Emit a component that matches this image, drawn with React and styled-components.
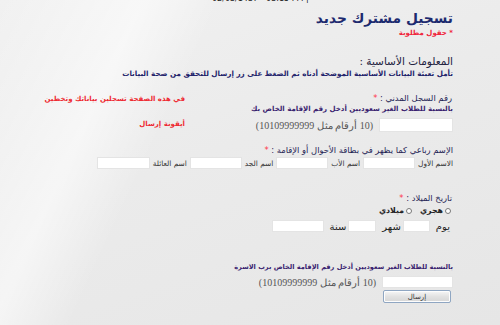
import React, { useState } from 'react';
import styled, { createGlobalStyle } from 'styled-components';

const GlobalStyle = createGlobalStyle`
  html, body {
    margin: 0;
    padding: 0;
  }
  body {
    font-family: "DejaVu Sans", "Liberation Sans", sans-serif;
  }
`;

const Page = styled.div`
  width: 500px;
  height: 325px;
  overflow: hidden;
  direction: rtl;
  box-sizing: border-box;
  padding: 0 47px 0 0;
  background:
    linear-gradient(115deg, rgba(255,255,255,0) 0%, rgba(255,255,255,0.55) 22%, rgba(255,255,255,0) 34%),
    linear-gradient(160deg, #f1f1f1 0%, #ebebeb 45%, #e6e6e6 100%);
`;

const TopLine = styled.div`
  direction: ltr;
  margin-top: -6px;
  height: 11px;
  padding-left: 212px;
  font-size: 8px;
  color: #222;
  white-space: nowrap;
`;

const Title = styled.h1`
  margin: 2px 0 0;
  font-size: 13.8px;
  font-weight: bold;
  color: #1d2a6f;
  line-height: 22px;
`;

const Required = styled.div`
  font-size: 7px;
  font-weight: bold;
  color: #f0243a;
  line-height: 9px;
`;

const SectionTitle = styled.h2`
  margin: 16px 0 0;
  font-size: 10.5px;
  font-weight: normal;
  color: #222240;
  line-height: 15px;
`;

const Instructions = styled.p`
  margin: 0;
  font-size: 7.2px;
  font-weight: bold;
  color: #23236b;
  line-height: 10px;
  white-space: nowrap;
`;

const FirstBlock = styled.div`
  display: flex;
  justify-content: space-between;
  align-items: flex-start;
  margin-top: 14px;
`;

const Field = styled.div`
  display: flex;
  flex-direction: column;
  margin-top: ${p => p.$top || 0}px;
`;

const Label = styled.div`
  font-size: 8.4px;
  color: #1f1f55;
  line-height: 11px;
  padding-right: ${p => p.$indent || 0}px;
  white-space: nowrap;
`;

const Star = styled.span`
  color: #ff3348;
`;

const Note = styled.div`
  font-size: ${p => p.$size || 7}px;
  font-weight: bold;
  color: #3a1f70;
  line-height: 10px;
  white-space: nowrap;
`;

const Row = styled.div`
  display: flex;
  align-items: center;
  gap: ${p => p.$gap || 3}px;
  margin-top: ${p => p.$top || 0}px;
  padding-right: ${p => p.$indent || 0}px;
`;

const Input = styled.input`
  box-sizing: border-box;
  width: ${p => p.$w}px;
  height: ${p => p.$h || 13}px;
  border: 1px solid #e4e4e4;
  background: #fff;
  padding: 0;
  margin: 0;
  outline: none;
`;

const Hint = styled.span`
  font-family: "Liberation Serif", "DejaVu Serif", serif;
  font-size: 10px;
  color: #555;
  white-space: nowrap;
  margin-right: 3px;
`;

const SmallLabel = styled.span`
  font-size: 7.4px;
  color: #333;
  white-space: nowrap;
`;

const DateLabel = styled.span`
  font-size: 10px;
  color: #222;
  white-space: nowrap;
  margin-left: 4px;
`;

const SideText = styled.div`
  width: 140px;
  padding-left: 45px;
  font-size: 7px;
  font-weight: bold;
  color: #ee2a32;
  line-height: 12px;
  text-align: right;
  white-space: nowrap;
`;

const SideLine = styled.div`
  margin-bottom: ${p => p.$gap || 0}px;
`;

const RadioGroup = styled.label`
  display: inline-flex;
  align-items: center;
  gap: 2px;
  font-size: 7.8px;
  font-weight: bold;
  color: #222;
  margin-left: 5px;
`;

const Radio = styled.input`
  width: 6px;
  height: 6px;
  margin: 0;
  accent-color: #999;
`;

const Button = styled.button`
  box-sizing: border-box;
  width: 68px;
  height: 13px;
  margin-top: 2px;
  margin-right: 2px;
  padding: 0;
  font-family: "DejaVu Sans", sans-serif;
  font-size: 7px;
  color: #333;
  border: 1px solid #8fa6c2;
  border-radius: 2px;
  background: linear-gradient(#f7f7f7, #e2e2e2 50%, #d6d6d6);
  box-shadow: inset 0 0 0 1px #fdfdfd;
`;

const App = () => {
  const [calendar, setCalendar] = useState('');

  return (
    <>
      <GlobalStyle />
      <Page>
        <TopLine>02/03/1437 - 03:15 PM |</TopLine>
        <Title>تسجيل مشترك جديد</Title>
        <Required>* حقول مطلوبة</Required>

        <SectionTitle>المعلومات الأساسية :</SectionTitle>
        <Instructions>
          تأمل تعبئة البيانات الأساسية الموضحة أدناه ثم الضغط على زر إرسال للتحقق من صحة البيانات
        </Instructions>

        <FirstBlock>
          <Field>
            <Label $indent={1}>
              رقم السجل المدني : <Star>*</Star>
            </Label>
            <Note $size={7}>بالنسبة للطلاب الغير سعوديين أدخل رقم الإقامة الخاص بك</Note>
            <Row $top={4} $gap={0}>
              <Input $w={74} $h={14} />
              <Hint>(10 أرقام مثل 10109999999)</Hint>
            </Row>
          </Field>
          <SideText>
            <SideLine $gap={13}>في هذه الصفحة تسجلين بياناتك وتخطين</SideLine>
            <SideLine>أيقونة إرسال</SideLine>
          </SideText>
        </FirstBlock>

        <Field $top={13}>
          <Label>
            الإسم رباعي كما يظهر في بطاقة الأحوال أو الإقامة : <Star>*</Star>
          </Label>
          <Row $top={1} $gap={3}>
            <SmallLabel>الاسم الأول</SmallLabel>
            <Input $w={52} $h={12} />
            <SmallLabel>اسم الأب</SmallLabel>
            <Input $w={52} $h={12} />
            <SmallLabel>اسم الجد</SmallLabel>
            <Input $w={52} $h={12} />
            <SmallLabel>اسم العائلة</SmallLabel>
            <Input $w={53} $h={12} />
          </Row>
        </Field>

        <Field $top={24}>
          <Label $indent={1}>
            تاريخ الميلاد : <Star>*</Star>
          </Label>
          <Row $top={2} $gap={0} $indent={2}>
            <RadioGroup>
              <Radio
                type="radio"
                name="cal"
                checked={calendar === 'h'}
                onChange={() => setCalendar('h')}
              />
              هجري
            </RadioGroup>
            <RadioGroup>
              <Radio
                type="radio"
                name="cal"
                checked={calendar === 'g'}
                onChange={() => setCalendar('g')}
              />
              ميلادي
            </RadioGroup>
          </Row>
          <Row $top={5} $gap={2} $indent={3}>
            <DateLabel>يوم</DateLabel>
            <Input $w={27} $h={12} />
            <DateLabel>شهر</DateLabel>
            <Input $w={28} $h={12} />
            <DateLabel>سنة</DateLabel>
            <Input $w={52} $h={12} />
          </Row>
        </Field>

        <Field $top={30}>
          <Note $size={6.6}>بالنسبة للطلاب الغير سعوديين أدخل رقم الإقامة الخاص برب الاسرة</Note>
          <Row $top={4} $gap={0}>
            <Input $w={71} $h={12} />
            <Hint>(10 أرقام مثل 10109999999)</Hint>
          </Row>
          <Row $top={0}>
            <Button type="button">إرسال</Button>
          </Row>
        </Field>
      </Page>
    </>
  );
};

export default App;
